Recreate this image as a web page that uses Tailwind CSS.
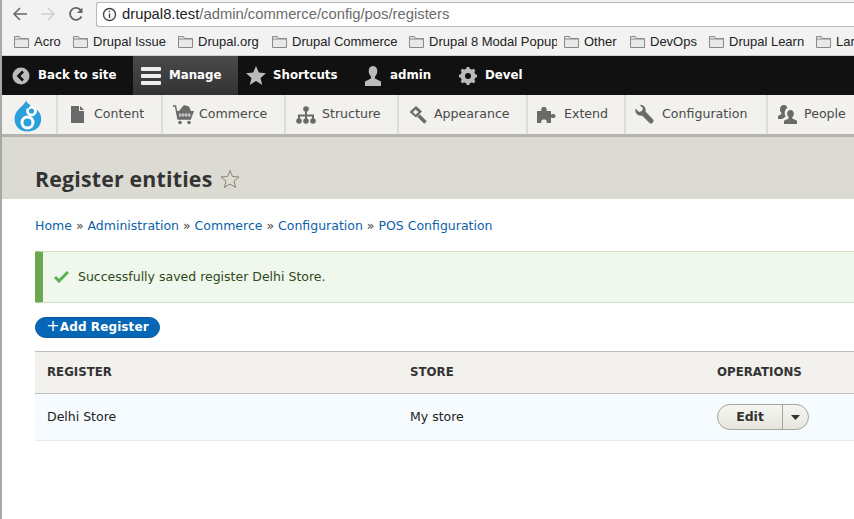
<!DOCTYPE html>
<html lang="en">
<head>
    <meta charset="UTF-8">
    <title>Register entities</title>
    <script src="https://cdn.jsdelivr.net/npm/@tailwindcss/browser@4"></script>
</head>
<body class="bg-white w-[854px] h-[519px] overflow-hidden font-['DejaVu_Sans',sans-serif]">
<div class="border-l-2 border-[#a8a8a8] h-[519px] overflow-hidden">

    <!-- browser chrome -->
    <div class="h-[28px] bg-[#f2f2f2] flex items-center">
        <div class="w-[94px] shrink-0 flex items-center pl-[10px] gap-[12px]">
            <svg width="16" height="16" viewBox="0 0 16 16" fill="none" stroke="#666" stroke-width="1.5"><path d="M15 8H2M8 2L2 8l6 6"/></svg>
            <svg width="16" height="16" viewBox="0 0 16 16" fill="none" stroke="#d0d0d0" stroke-width="1.5"><path d="M1 8h13M8 2l6 6-6 6"/></svg>
            <svg width="16" height="16" viewBox="0 0 16 16" fill="none" stroke="#666" stroke-width="1.8"><path d="M13.500 10.500A6 6 0 1 1 13 4.500"/><path d="M14.500 1.500v5.500H9" fill="#666" stroke="none"/></svg>
        </div>
        <div class="flex-1 h-[25px] bg-white border border-[#b8b8b8] border-r-0 rounded-l-[3px] flex items-center pl-[5px] font-['Liberation_Sans',sans-serif] text-[14.8px] text-[#6b6b6b]">
            <svg class="mr-[5px]" width="15" height="15" viewBox="0 0 15 15" fill="none" stroke="#444" stroke-width="1.4"><circle cx="7.500" cy="7.500" r="6"/><path d="M7.500 6.500v4.500M7.500 3.800v1.500"/></svg>
            <span class="text-[#222]">drupal8.test</span>/admin/commerce/config/pos/registers
        </div>
    </div>

    <!-- bookmarks -->
    <div class="h-[28px] bg-[#f2f2f2] border-b border-[#d0d0d0] flex items-center pl-[12px] font-['Liberation_Sans',sans-serif] text-[13px] text-[#222] whitespace-nowrap overflow-hidden">
        <span class="flex items-center gap-[5px] w-[59px] shrink-0"><svg width="15" height="12" viewBox="0 0 15 12" fill="#e8e8e8" stroke="#888"><path d="M.5 11.500v-11h5l1 2h8v9z"/><path d="M.5 3h14" fill="none"/></svg>Acro</span>
        <span class="flex items-center gap-[5px] w-[105px] shrink-0"><svg width="15" height="12" viewBox="0 0 15 12" fill="#e8e8e8" stroke="#888"><path d="M.5 11.500v-11h5l1 2h8v9z"/><path d="M.5 3h14" fill="none"/></svg>Drupal Issue</span>
        <span class="flex items-center gap-[5px] w-[94px] shrink-0"><svg width="15" height="12" viewBox="0 0 15 12" fill="#e8e8e8" stroke="#888"><path d="M.5 11.500v-11h5l1 2h8v9z"/><path d="M.5 3h14" fill="none"/></svg>Drupal.org</span>
        <span class="flex items-center gap-[5px] w-[137px] shrink-0"><svg width="15" height="12" viewBox="0 0 15 12" fill="#e8e8e8" stroke="#888"><path d="M.5 11.500v-11h5l1 2h8v9z"/><path d="M.5 3h14" fill="none"/></svg>Drupal Commerce</span>
        <span class="flex items-center gap-[5px] w-[155px] shrink-0"><svg class="shrink-0" width="15" height="12" viewBox="0 0 15 12" fill="#e8e8e8" stroke="#888"><path d="M.5 11.500v-11h5l1 2h8v9z"/><path d="M.5 3h14" fill="none"/></svg><span class="w-[128px] overflow-hidden">Drupal 8 Modal Popup</span></span>
        <span class="flex items-center gap-[5px] w-[66px] shrink-0"><svg width="15" height="12" viewBox="0 0 15 12" fill="#e8e8e8" stroke="#888"><path d="M.5 11.500v-11h5l1 2h8v9z"/><path d="M.5 3h14" fill="none"/></svg>Other</span>
        <span class="flex items-center gap-[5px] w-[79px] shrink-0"><svg width="15" height="12" viewBox="0 0 15 12" fill="#e8e8e8" stroke="#888"><path d="M.5 11.500v-11h5l1 2h8v9z"/><path d="M.5 3h14" fill="none"/></svg>DevOps</span>
        <span class="flex items-center gap-[5px] w-[107px] shrink-0"><svg width="15" height="12" viewBox="0 0 15 12" fill="#e8e8e8" stroke="#888"><path d="M.5 11.500v-11h5l1 2h8v9z"/><path d="M.5 3h14" fill="none"/></svg>Drupal Learn</span>
        <span class="flex items-center gap-[5px] shrink-0"><svg width="15" height="12" viewBox="0 0 15 12" fill="#e8e8e8" stroke="#888"><path d="M.5 11.500v-11h5l1 2h8v9z"/><path d="M.5 3h14" fill="none"/></svg>Lar</span>
    </div>

    <!-- admin toolbar -->
    <div class="h-[39px] bg-[#111] flex items-stretch text-white font-bold text-[11.8px]">
        <a class="flex items-center pl-[10px] w-[131px] gap-[8px]">
            <svg width="18" height="18" viewBox="0 0 18 18"><circle cx="9" cy="9" r="8.500" fill="#bbb"/><path d="M11 4.500L6.500 9l4.500 4.500" fill="none" stroke="#111" stroke-width="2.600"/></svg>
            Back to site
        </a>
        <a class="flex items-center pl-[8px] w-[105px] gap-[8px] bg-gradient-to-b from-[#4a4a4a] to-[#333]">
            <svg width="20" height="20" viewBox="0 0 20 20" fill="#eee"><rect y="1" width="20" height="4" rx="1"/><rect y="8" width="20" height="4" rx="1"/><rect y="15" width="20" height="4" rx="1"/></svg>
            Manage
        </a>
        <a class="flex items-center pl-[8px] w-[117px] gap-[7px]">
            <svg width="20" height="20" viewBox="0 0 20 20" fill="#bbb"><path d="M10 0l2.800 6.600 7.200.6-5.500 4.700 1.700 7.100L10 15l-6.200 4 1.700-7.100L0 7.200l7.200-.6z"/></svg>
            Shortcuts
        </a>
        <a class="flex items-center pl-[8px] w-[102px] gap-[7px]">
            <svg width="20" height="20" viewBox="0 0 20 20" fill="#bbb"><path d="M10 0c2.800 0 4.300 2.200 4.300 5 0 2.400-1.100 4.400-2.300 5.400v2l6 3V20H2v-4.600l6-3v-2C6.800 9.400 5.700 7.400 5.700 5c0-2.800 1.500-5 4.300-5z"/></svg>
            admin
        </a>
        <a class="flex items-center pl-[2px] gap-[8px]">
            <svg width="18" height="18" viewBox="0 0 18 18"><circle cx="9" cy="9" r="5.500" fill="none" stroke="#bbb" stroke-width="4"/><path d="M9 0v18M0 9h18M2.600 2.600l12.800 12.800M15.400 2.600L2.600 15.400" stroke="#bbb" stroke-width="3"/><circle cx="9" cy="9" r="3" fill="#111"/></svg>
            Devel
        </a>
    </div>

    <!-- menu tray -->
    <div class="h-[42px] bg-[#f2f1ee] border-b-[3px] border-[#b4b4ac] flex items-stretch text-[12.6px] text-[#4a4a4a] whitespace-nowrap overflow-hidden">
        <div class="w-[56px] shrink-0 border-r-2 border-[#dcdcd8] flex items-center pl-[11px]">
            <svg class="mt-[3px]" width="30" height="32" viewBox="0 0 30 32"><path d="M13 .5c1 4 9 6.500 13 11.500 4.500 6 2.500 19.500-11 19.500C1 31.500-.5 18 3.500 12 6.500 7.500 11.500 5 13 .5z" fill="#2b9fdc"/><circle cx="18.500" cy="11" r="4" fill="none" stroke="#fff" stroke-width="2.800"/><circle cx="14.500" cy="22.500" r="5.500" fill="none" stroke="#fff" stroke-width="3"/><path d="M13 5l3 2.500" stroke="#2b9fdc" stroke-width="3"/></svg>
        </div>
        <a class="w-[105px] shrink-0 border-r-2 border-[#dcdcd8] flex items-center pl-[13px] gap-[10px]">
            <svg width="13" height="17" viewBox="0 0 13 17" fill="#6a6a6a"><path d="M0 0h8v5h5v12H0zM9 0l4 4H9z"/></svg>
            Content
        </a>
        <a class="w-[123px] shrink-0 border-r-2 border-[#dcdcd8] flex items-center pl-[10px] gap-[5px]">
            <svg width="21" height="21" viewBox="0 0 21 21"><path d="M3 7h18l-3 8H5z" fill="#6a6a6a"/><path d="M7 9v4M10 9v4M13 9v4M16 9v4M6 11h12" stroke="#f2f1ee" stroke-width=".8"/><path d="M0 2h2.500L5 15h13" fill="none" stroke="#6a6a6a" stroke-width="1.400"/><path d="M6 7l5-6 5 1.500L18 7z" fill="#6a6a6a"/><circle cx="7" cy="18.500" r="1.800" fill="#6a6a6a"/><circle cx="16" cy="18.500" r="1.800" fill="#6a6a6a"/></svg>
            Commerce
        </a>
        <a class="w-[113px] shrink-0 border-r-2 border-[#dcdcd8] flex items-center pl-[10px] gap-[6px]">
            <svg width="20" height="18" viewBox="0 0 20 18" fill="#6a6a6a"><circle cx="10" cy="3" r="2.800"/><circle cx="3" cy="15" r="2.800"/><circle cx="10" cy="15" r="2.800"/><circle cx="17" cy="15" r="2.800"/><path d="M9 5h2v3.500h7V13h-2v-2.500h-5V13H9v-2.500H4V13H2V8.500h7z"/></svg>
            Structure
        </a>
        <a class="w-[129px] shrink-0 border-r-2 border-[#dcdcd8] flex items-center pl-[9px] gap-[6px]">
            <svg width="20" height="20" viewBox="0 0 20 20"><path d="M8 1l6 5.500-6 6L1.500 7z" fill="#6a6a6a"/><path d="M7.500 4.500l3 2.500-3 2.800-2.600-2.700z" fill="#f2f1ee"/><path d="M10.500 10.500l7 7" stroke="#6a6a6a" stroke-width="3.600"/></svg>
            Appearance
        </a>
        <a class="w-[98px] shrink-0 border-r-2 border-[#dcdcd8] flex items-center pl-[9px] gap-[7px]">
            <svg width="20" height="18" viewBox="0 0 20 18" fill="#6a6a6a"><path d="M0 5h4.500C4 3.500 4 1 7 1s3 2.500 2.500 4H14v3.500c1.500-1 4.500-1 4.500 1.500S15.500 12.500 14 11.500V17H9.500c.5-1.500.5-3.500-2.500-3.500S4 15.500 4.500 17H0z"/></svg>
            Extend
        </a>
        <a class="w-[142px] shrink-0 border-r-2 border-[#dcdcd8] flex items-center pl-[9px] gap-[8px]">
            <svg width="19" height="19" viewBox="0 0 19 19" fill="#6a6a6a"><path d="M.5 3.500L4 7l3-1 1-3L4.500 0C8-.5 11.500 2 10.500 6.500l8 8.500c.5 2-1.500 4-3.500 3.500L7 10.500C3 11.500-.5 8 .5 3.500z"/></svg>
            Configuration
        </a>
        <a class="flex-1 flex items-center pl-[9px] gap-[6px]">
            <svg width="21" height="19" viewBox="0 0 21 19" fill="#6a6a6a"><path d="M13.500 5c2.300 0 3.300 1.800 3.300 3.700 0 1.500-.7 2.800-1.500 3.500v1.300l4.700 2.200V19H7v-3.300l4.700-2.200v-1.300c-.8-.7-1.500-2-1.500-3.500 0-1.900 1-3.700 3.300-3.700z"/><path d="M7 0c2 0 3 1.300 3.200 3-1.700 1-2.700 3-2.500 5.500 0 1.200.4 2.200 1 3L5 14H1v-3l3.500-2V8C3.500 7 3 6 3 4.500 3 2 4.500 0 7 0z"/></svg>
            People
        </a>
    </div>

    <!-- page title -->
    <div class="h-[62px] bg-[#dbdbd3] pl-[33px] pt-[27px] flex items-start gap-[8px]">
        <h1 class="text-[21.300px] leading-[30px] font-bold text-[#333] tracking-[0.2px] font-['Open_Sans',sans-serif]">Register entities</h1>
        <svg class="mt-[5px]" width="20" height="20" viewBox="0 0 20 20" fill="none" stroke="#85856f"><path d="M10 1.500l2.500 6 6.500.5-5 4.200 1.600 6.300L10 15l-5.600 3.500L6 12.200 1 8l6.500-.5z"/></svg>
    </div>

    <!-- content -->
    <div class="pl-[33px] text-[12.500px] font-['DejaVu_Sans',sans-serif]">
        <div class="pt-[19px] leading-[16px] text-[#0b5fa8]">Home <span class="text-[#444]">»</span> Administration <span class="text-[#444]">»</span> Commerce <span class="text-[#444]">»</span> Configuration <span class="text-[#444]">»</span> POS Configuration</div>

        <div class="mt-[17px] h-[52px] bg-[#f0f7ec] border border-l-0 border-r-0 border-[#c9e1bd] border-l-[8px] border-l-[#6aa84f] rounded-l-[2px] flex items-center pl-[11px] gap-[9px] text-[#2f4a20]">
            <svg width="15" height="12" viewBox="0 0 15 12" fill="none" stroke="#5cb252" stroke-width="3"><path d="M1 6l4 4 9-9"/></svg>
            Successfully saved register Delhi Store.
        </div>

        <button class="mt-[14px] block w-[125px] h-[21px] rounded-full bg-[#0567b5] border border-[#0a5596] text-white font-bold text-[12px] leading-[19px] tracking-[0.1px] text-center"><span class="text-[16px] leading-[15px] font-normal">+</span>Add Register</button>

        <table class="mt-[13px] w-[819px] table-fixed border-collapse">
            <tr class="h-[42px] bg-[#f2f1ee] border-t border-b border-[#bfbfba] text-left text-[11.800px] font-bold text-[#333]">
                <th class="w-[363px] pl-[12px]">REGISTER</th>
                <th class="w-[306px] pl-[12px]">STORE</th>
                <th class="pl-[13px]">OPERATIONS</th>
            </tr>
            <tr class="h-[47px] bg-[#f6fbff] border-b border-[#e4e8ea] text-[#222]">
                <td class="pl-[12px]">Delhi Store</td>
                <td class="pl-[12px]">My store</td>
                <td class="pl-[13px]">
                    <div class="w-[92px] h-[26px] rounded-full border border-[#a6a69a] bg-gradient-to-b from-[#f6f6f2] to-[#e6e6dd] flex items-stretch">
                        <span class="w-[65px] border-r border-[#a6a69a] text-center leading-[24px] font-bold text-[#333]">Edit</span>
                        <span class="flex-1 flex items-center justify-center"><svg width="9" height="5" viewBox="0 0 9 5" fill="#333"><path d="M0 0h9L4.500 5z"/></svg></span>
                    </div>
                </td>
            </tr>
        </table>
    </div>
</div>
</body>
</html>
